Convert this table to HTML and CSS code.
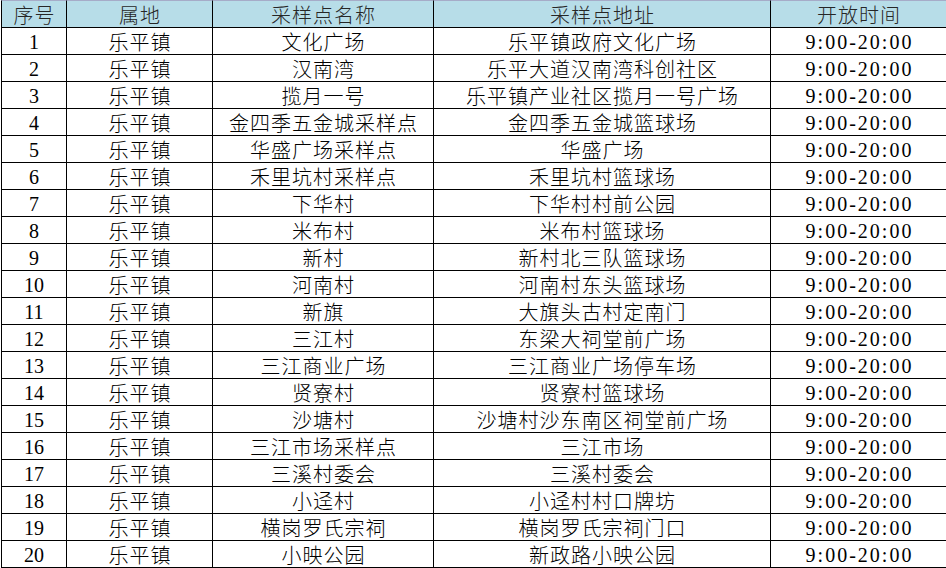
FILE: index.html
```html
<!DOCTYPE html>
<html lang="zh-CN">
<head>
<meta charset="utf-8">
<title>采样点</title>
<link rel="stylesheet" href="styles.css">
</head>
<body>
<div class="sheet">
  <div class="cell head first">序号</div>
  <div class="cell head">属地</div>
  <div class="cell head">采样点名称</div>
  <div class="cell head">采样点地址</div>
  <div class="cell head last">开放时间</div>

  <div class="cell num first">1</div><div class="cell">乐平镇</div><div class="cell">文化广场</div><div class="cell">乐平镇政府文化广场</div><div class="cell time last">9:00-20:00</div>
  <div class="cell num first">2</div><div class="cell">乐平镇</div><div class="cell">汉南湾</div><div class="cell">乐平大道汉南湾科创社区</div><div class="cell time last">9:00-20:00</div>
  <div class="cell num first">3</div><div class="cell">乐平镇</div><div class="cell">揽月一号</div><div class="cell">乐平镇产业社区揽月一号广场</div><div class="cell time last">9:00-20:00</div>
  <div class="cell num first">4</div><div class="cell">乐平镇</div><div class="cell">金四季五金城采样点</div><div class="cell">金四季五金城篮球场</div><div class="cell time last">9:00-20:00</div>
  <div class="cell num first">5</div><div class="cell">乐平镇</div><div class="cell">华盛广场采样点</div><div class="cell">华盛广场</div><div class="cell time last">9:00-20:00</div>
  <div class="cell num first">6</div><div class="cell">乐平镇</div><div class="cell">禾里坑村采样点</div><div class="cell">禾里坑村篮球场</div><div class="cell time last">9:00-20:00</div>
  <div class="cell num first">7</div><div class="cell">乐平镇</div><div class="cell">下华村</div><div class="cell">下华村村前公园</div><div class="cell time last">9:00-20:00</div>
  <div class="cell num first">8</div><div class="cell">乐平镇</div><div class="cell">米布村</div><div class="cell">米布村篮球场</div><div class="cell time last">9:00-20:00</div>
  <div class="cell num first">9</div><div class="cell">乐平镇</div><div class="cell">新村</div><div class="cell">新村北三队篮球场</div><div class="cell time last">9:00-20:00</div>
  <div class="cell num first">10</div><div class="cell">乐平镇</div><div class="cell">河南村</div><div class="cell">河南村东头篮球场</div><div class="cell time last">9:00-20:00</div>
  <div class="cell num first">11</div><div class="cell">乐平镇</div><div class="cell">新旗</div><div class="cell">大旗头古村定南门</div><div class="cell time last">9:00-20:00</div>
  <div class="cell num first">12</div><div class="cell">乐平镇</div><div class="cell">三江村</div><div class="cell">东梁大祠堂前广场</div><div class="cell time last">9:00-20:00</div>
  <div class="cell num first">13</div><div class="cell">乐平镇</div><div class="cell">三江商业广场</div><div class="cell">三江商业广场停车场</div><div class="cell time last">9:00-20:00</div>
  <div class="cell num first">14</div><div class="cell">乐平镇</div><div class="cell">贤寮村</div><div class="cell">贤寮村篮球场</div><div class="cell time last">9:00-20:00</div>
  <div class="cell num first">15</div><div class="cell">乐平镇</div><div class="cell">沙塘村</div><div class="cell">沙塘村沙东南区祠堂前广场</div><div class="cell time last">9:00-20:00</div>
  <div class="cell num first">16</div><div class="cell">乐平镇</div><div class="cell">三江市场采样点</div><div class="cell">三江市场</div><div class="cell time last">9:00-20:00</div>
  <div class="cell num first">17</div><div class="cell">乐平镇</div><div class="cell">三溪村委会</div><div class="cell">三溪村委会</div><div class="cell time last">9:00-20:00</div>
  <div class="cell num first">18</div><div class="cell">乐平镇</div><div class="cell">小迳村</div><div class="cell">小迳村村口牌坊</div><div class="cell time last">9:00-20:00</div>
  <div class="cell num first">19</div><div class="cell">乐平镇</div><div class="cell">横岗罗氏宗祠</div><div class="cell">横岗罗氏宗祠门口</div><div class="cell time last">9:00-20:00</div>
  <div class="cell num first">20</div><div class="cell">乐平镇</div><div class="cell">小映公园</div><div class="cell">新政路小映公园</div><div class="cell time last">9:00-20:00</div>
</div>
</body>
</html>
```

FILE: styles.css
```css
html, body {
  margin: 0;
  padding: 0;
  background: #ffffff;
}

body {
  width: 946px;
  height: 568px;
  overflow: hidden;
}

.sheet {
  margin-left: 1px;
  display: grid;
  grid-template-columns: 66px 146px 221px 337px 175px;
  grid-template-rows: 28px repeat(20, 27px);
  font-family: "Noto Sans CJK SC", "Noto Sans", sans-serif;
  font-weight: 300;
  font-size: 20px;
  color: #000000;
}

.cell {
  box-sizing: border-box;
  border-right: 1px solid #000000;
  border-bottom: 1px solid #000000;
  display: flex;
  align-items: center;
  justify-content: center;
  padding-top: 2px;
  line-height: 20px;
  letter-spacing: 1px;
  text-indent: 1px;
  white-space: nowrap;
  overflow: hidden;
}

.cell.first {
  border-left: 1px solid #000000;
}

.cell.last {
  border-right: none;
}

.cell.head {
  background: #b7dde8;
  border-top: 1px solid #a6acc8;
  color: #262626;
}

.cell.num {
  font-family: "Liberation Serif", serif;
  font-weight: 400;
  letter-spacing: 0;
  text-indent: 0;
}

.cell.time {
  font-family: "Liberation Serif", serif;
  font-weight: 400;
  letter-spacing: 2px;
  text-indent: 2px;
}
```
